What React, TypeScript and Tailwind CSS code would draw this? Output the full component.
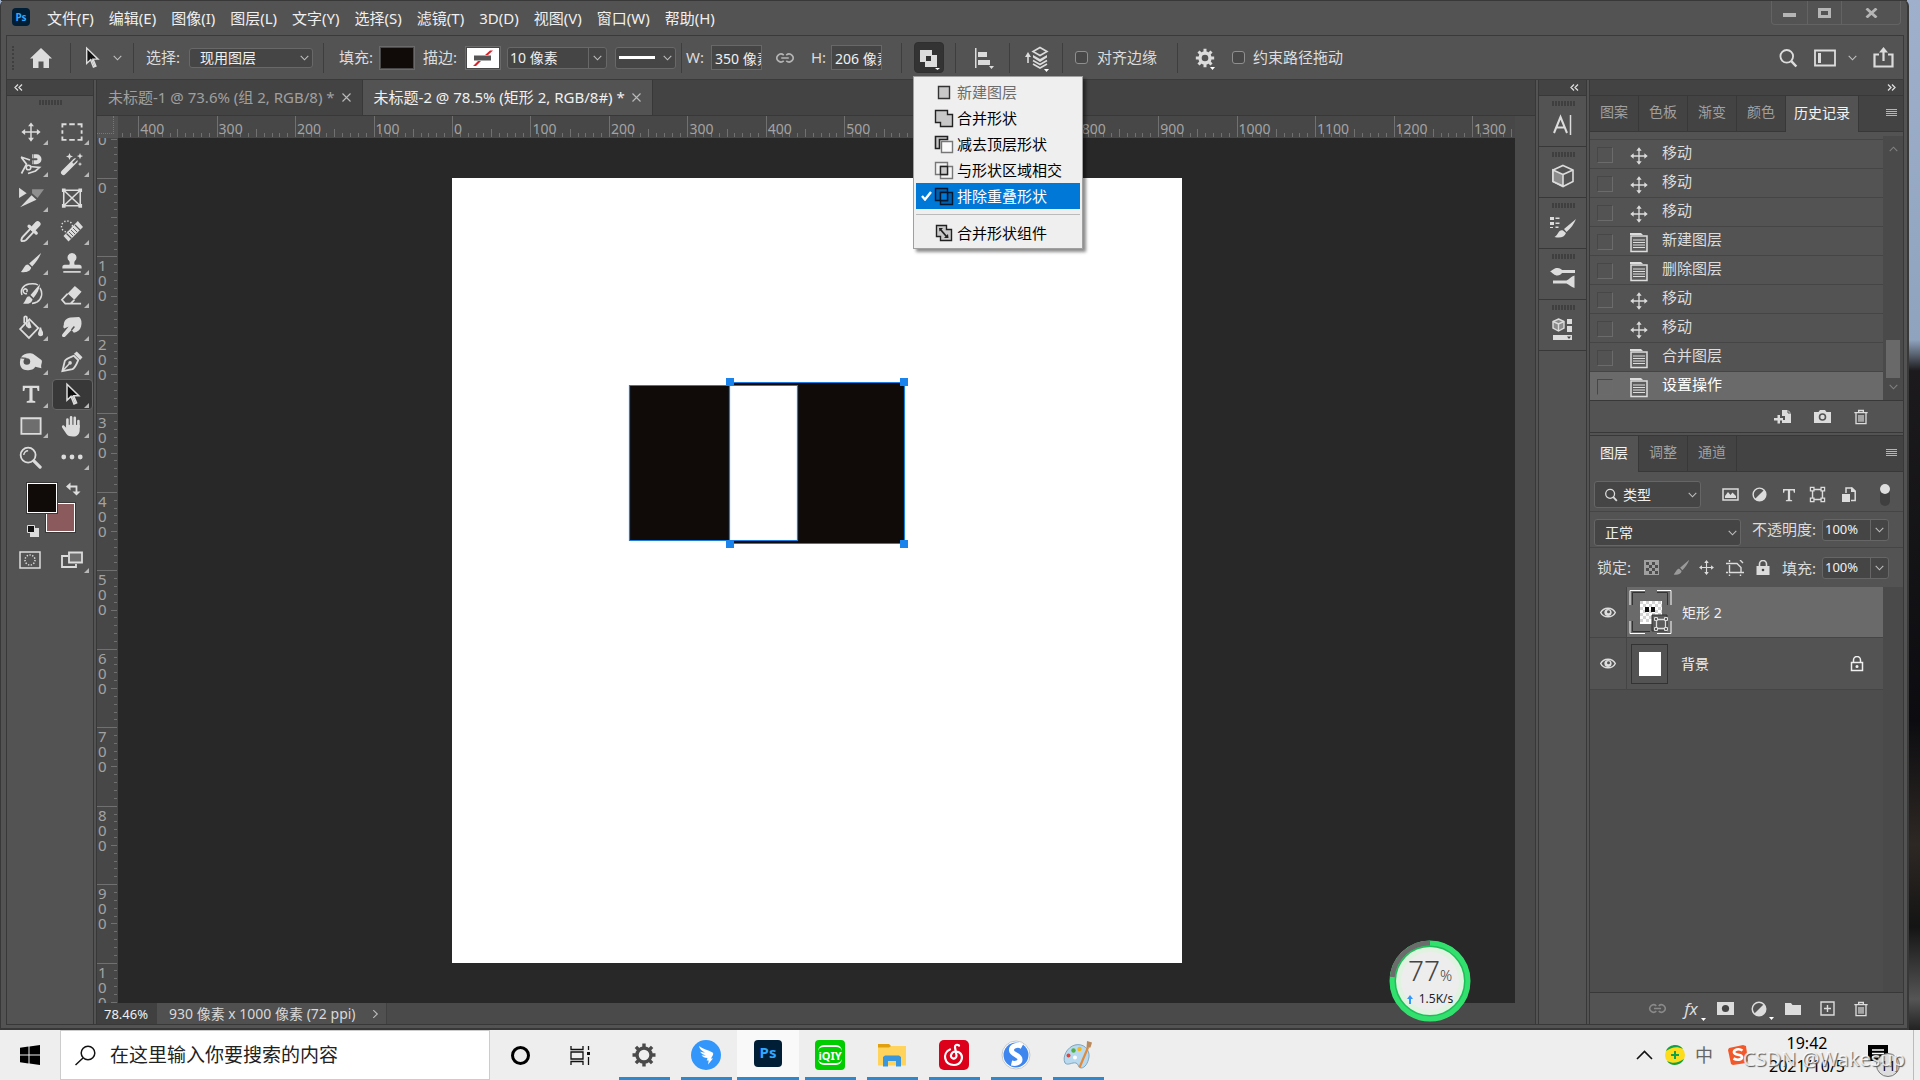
import { ReactNode, useState } from 'react';
import clsx from 'clsx';

// ---------- shared icon helpers ----------

interface IconProps {
  size?: number;
  className?: string;
  children?: ReactNode;
}

function Svg({ size = 24, className, children }: IconProps) {
  return (
    <svg width={size} height={size} viewBox="0 0 24 24" fill="none" stroke="currentColor" strokeWidth={1.6} className={clsx('shrink-0', className)} aria-hidden="true">
      {children}
    </svg>
  );
}

function Chevron({ className }: { className?: string }) {
  return (
    <svg width={9} height={6} viewBox="0 0 9 6" fill="none" stroke="currentColor" strokeWidth={1.1} className={clsx('shrink-0 opacity-80', className)} aria-hidden="true">
      <path d="M.7.8 4.5 4.8 8.3.8" />
    </svg>
  );
}

// Small triangle marking a button that opens a flyout
function Caret() {
  return (
    <svg width={5} height={3} className="absolute right-0.5 -bottom-0.5" aria-hidden="true">
      <path d="M0 0h5L2.500 3z" fill="#fff" />
    </svg>
  );
}

function MoveIcon({ size = 22, className }: IconProps) {
  return (
    <Svg size={size} className={className}>
      <path d="M12 4v16M4 12h16" />
      <path d="M12 1.5 8.8 5.6h6.4zM12 22.5l-3.2-4.1h6.4zM1.5 12l4.1-3.2v6.4zM22.5 12l-4.1-3.2v6.4z" fill="currentColor" stroke="none" />
    </Svg>
  );
}

function ArrowCursor({ size = 24 }: IconProps) {
  return (
    <Svg size={size}>
      <path d="M7 2.2v16l4-3.8 3 7.6 2.6-1.1-3-7.2h5.2z" fill="#111" stroke="#ddd" strokeWidth={1.5} />
      <path d="m11.5 14.2 3 7.3 1.6-.7-3-7z" fill="#ddd" stroke="none" />
    </Svg>
  );
}

function LinkIcon({ size = 20 }: IconProps) {
  return (
    <Svg size={size}>
      <path d="M10.5 8.6A5 4.6 0 1 0 10.5 15.4M13.5 8.6a5 4.6 0 1 1 0 6.8M7.5 12h9" strokeWidth={2} />
    </Svg>
  );
}

function TrashIcon({ size = 18 }: IconProps) {
  return (
    <Svg size={size}>
      <path d="M2 5.5h20M8.5 5V2.2h7V5M4.5 6v16h15V6" strokeWidth={2} />
      <path d="M9 9v10M12 9v10M15 9v10" strokeWidth={1.8} />
    </Svg>
  );
}

function SearchIcon({ size = 20 }: IconProps) {
  return (
    <Svg size={size}>
      <circle cx="10.5" cy="10" r="7.6" strokeWidth={2.2} />
      <path d="m16 15.8 6 6.4" strokeWidth={3} />
    </Svg>
  );
}

function HalfCircle({ size = 18 }: IconProps) {
  return (
    <Svg size={size}>
      <circle cx="12" cy="12" r="9" strokeWidth={2} />
      <path d="M18.4 5.6A9 9 0 0 1 5.6 18.4z" fill="currentColor" stroke="none" />
    </Svg>
  );
}

function ShapeNodes({ size = 18 }: IconProps) {
  return (
    <Svg size={size}>
      <path d="M5 5h14v14H5z" strokeWidth={2} />
      <path d="M2 2h5v5H2zM17 2h5v5h-5zM2 17h5v5H2zM17 17h5v5h-5z" fill="#535353" strokeWidth={1.8} />
    </Svg>
  );
}

function TypeIcon({ size = 22 }: IconProps) {
  return (
    <Svg size={size}>
      <path d="M3 3h18v5.6h-1.7l-.8-3.2h-4.8v13.8l3 .6V21.500H7.300v-1.700l3-.6V5.400H5.500l-.8 3.200H3z" fill="currentColor" stroke="none" />
    </Svg>
  );
}

function GearIcon({ size = 20, className }: IconProps) {
  return (
    <Svg size={size} className={className}>
      <circle cx="12" cy="12" r="6" strokeWidth={4} />
      <path d="M12 1v4M12 19v4M1 12h4M19 12h4M4.200 4.200 7 7M17 17l2.800 2.800M4.200 19.800 7 17M17 7l2.800-2.800" strokeWidth={3.6} />
    </Svg>
  );
}

// ---------- toolbox ----------

interface Tool {
  name: string;
  corner?: boolean;
  active?: boolean;
  icon: ReactNode;
}

const tools: Tool[] = [
  { name: '移动工具', corner: true, icon: <MoveIcon /> },
  { name: '矩形选框工具', corner: true, icon: <Svg size={22}><path d="M1.500 7V3.500H6M9 3.500h6M18 3.500h4.500V7M22.500 10v4M22.500 17v3.500H18M15 20.500H9M6 20.500H1.500V17M1.500 14v-4" strokeWidth={2} /></Svg> },
  { name: '磁性套索工具', corner: true, icon: <Svg size={24}><path d="m2 5 9 3M2.200 5.200l5.300 7-5 9.300M11 14.500l9.500 1-4 3.500-7.500 2.500" strokeWidth={1.700} /><circle cx="9.500" cy="15.500" r="2.300" strokeWidth={1.600} /><path d="M13 4.200h4.500a2.800 2.800 0 0 1 0 6h-4.300" strokeWidth={4} /><path d="M14.200 1.500v5M14.200 8v5" stroke="#535353" strokeWidth={.8} /></Svg> },
  { name: '魔棒工具', corner: true, icon: <Svg size={24}><path d="M3.500 20.500 15 9" strokeWidth={5} strokeLinecap="round" /><path d="m13.500 10.500 3.300-3.300" stroke="#535353" strokeWidth={2} strokeLinecap="round" /><path d="m9.500 1 1 2.500 2.500 1-2.500 1-1 2.500-1-2.500-2.500-1 2.500-1zM20 1l.9 2.200 2.200.9-2.200.9L20 7.200 19.100 5l-2.200-.9 2.200-.9zM20 10l.6 1.500 1.500.6-1.500.6-.6 1.500-.6-1.500-1.500-.6 1.500-.6z" fill="currentColor" stroke="none" /></Svg> },
  { name: '切片选择工具', corner: true, icon: <Svg size={26}><path d="M1 2.500v9.500l7-4.500z" fill="currentColor" stroke="none" /><path d="M2 20.500 12.500 9.500l4.500 4z" fill="currentColor" stroke="none" /><path d="M13 4h11l-6 8-5-4.500z" fill="#8f8f8f" stroke="none" /></Svg> },
  { name: '图框工具', icon: <Svg size={22}><path d="M3 3.500h18v17H3zM3 3.500l18 17M21 3.500l-18 17" strokeWidth={1.700} /><path d="M1 1.500h4v4H1zM19 1.500h4v4h-4zM1 18.500h4v4H1zM19 18.500h4v4h-4z" fill="currentColor" stroke="none" /></Svg> },
  { name: '吸管工具', corner: true, icon: <Svg size={23}><path d="m13 8-9 9.500c-1.500 1.500-2 4.500-1 4.500s3.500-.3 4.500-1.300L16.500 11" strokeWidth={2} /><path d="m10.500 6.500 7.500 7.200M14.500 8.500l4-4.500" strokeWidth={3.400} strokeLinecap="round" /><path d="m15 9 4.500-4.800" strokeWidth={6} strokeLinecap="round" /></Svg> },
  { name: '修复画笔工具', corner: true, icon: <Svg size={24}><circle cx="7" cy="7.500" r="5.500" strokeDasharray="1.300 1.900" strokeWidth={1.400} /><path d="m3.500 17 5 5.500L23 8 17.800 2z" fill="currentColor" stroke="none" /><path d="m6.500 14.500 5 5M15 6l5 5" stroke="#535353" strokeWidth={1.200} /><path d="m9 13 4 4M11 11l4 4M13 9l4 4" stroke="#535353" strokeWidth={.9} /></Svg> },
  { name: '画笔工具', corner: true, icon: <Svg size={22}><path d="M23 1 10 12.500l3.300 3.300C17 12 21 6.500 23 1zM8.800 13.700c-3.800 0-3.800 3.800-7.800 8.100 5 1 10.500-.3 11.200-4.800z" fill="currentColor" stroke="none" /></Svg> },
  { name: '仿制图章工具', corner: true, icon: <Svg size={22}><path d="M12 1a5 5 0 0 1 3.300 8.600c-1 1-1 2.900-.4 4.400H20c1.500 0 2.500 1 2.500 2.500V18h-21v-1.500C1.500 15 2.500 14 4 14h5.100c.6-1.500.6-3.400-.4-4.400A5 5 0 0 1 12 1z" fill="currentColor" stroke="none" /><path d="M2.500 21.700h19" strokeWidth={1.800} /></Svg> },
  { name: '历史记录画笔工具', corner: true, icon: <Svg size={24}><path d="M7.500 10c2-2-1-4-2.500-2.500s-.5 5 3 4M3 13C1 8 4 3 10 2s9 1 9 1M21 6c3 5 2 11-3 14-2 1-5 1.500-5 1.500" strokeWidth={1.500} /><path d="M21 2 11.500 13l3 3C18 12 20.500 7 21 2zM10.300 14.200c-3.500 0-2.500 3.500-6.300 7.300 4.500 1 9 0 9.500-4.300z" fill="currentColor" stroke="none" /></Svg> },
  { name: '橡皮擦工具', corner: true, icon: <Svg size={23}><path d="M8 11 15.500 3l7 6L15 17.500z" fill="currentColor" stroke="none" /><path d="m8 11-6 6.500 3.500 4H11l4-4M5.500 21.500H22" strokeWidth={1.800} /></Svg> },
  { name: '油漆桶工具', corner: true, icon: <Svg size={25}><path d="M2 13.500 11 4l8.500 8.500-9 9.500zM8.500 11V2.500c0-1.500-2.500-1.500-2.500 0V8" strokeWidth={1.700} /><path d="M10.500 4 13 12l-2.500 1-2-1.500z" fill="currentColor" stroke="none" /><path d="M21.500 12c0 3.500-1.500 4-1.500 6s3.500 2 3.500 0-2-3-2-6z" fill="currentColor" /></Svg> },
  { name: '涂抹工具', corner: true, icon: <Svg size={23}><path d="M4 9c0-4 3-7 7-7.500L20 1c2.500 2 3 6 2 10-1 4-4 6-7.500 6.500L12 14.500l-6.500 7c-2 1.500-4.500-.5-3-2.500L9 11l-4.500 2C3 12 3.500 10.500 4 9z" fill="currentColor" stroke="none" /><path d="m12 14.500 3-3.500" stroke="#535353" /></Svg> },
  { name: '海绵工具', corner: true, icon: <Svg size={25}><path d="M3 8c2-4 9-5 12-3l7.500 5.500c1.500 2-1 4 0 8l-6-1.500c-1 3-7 4-10.500 3C1.500 18.500 1 12.500 3 8z" fill="currentColor" stroke="none" /><circle cx="8.500" cy="12" r="3.200" fill="#535353" stroke="none" /><path d="M3 8.500 8 9" stroke="#535353" strokeWidth={1.200} /></Svg> },
  { name: '钢笔工具', corner: true, icon: <Svg size={23}><path d="M2.500 22 5 11.500c2-3 6-4 9.500-5.500l4.500 4.500c-1.500 4-3 7.500-6 9.500z" strokeWidth={1.900} /><path d="m3 21.500 6.500-7" strokeWidth={1.500} /><circle cx="10.500" cy="13.500" r="1.900" fill="currentColor" stroke="none" /><path d="m14.500 4 3-2.500 6 6-2.500 3z" fill="currentColor" stroke="none" /></Svg> },
  { name: '横排文字工具', corner: true, icon: <TypeIcon size={22} /> },
  { name: '路径选择工具', corner: true, active: true, icon: <ArrowCursor /> },
  { name: '矩形工具', corner: true, icon: <Svg size={22}><path d="M1.500 3.500h21v17h-21z" fill="#6e6e6e" strokeWidth={2} /></Svg> },
  { name: '抓手工具', corner: true, icon: <Svg size={22}><path d="M7 12.500V5M11 12V2.500M15 12V3M19 13V6.500" strokeWidth={2.800} strokeLinecap="round" /><path d="M5.600 10.500V14L3.500 11.800c-1.500-1.300-3.200.2-2.300 1.700L6 20.800c1.500 2 3.500 2.700 7 2.700 5 0 7.400-3 7.400-7.500v-5z" fill="currentColor" stroke="none" /></Svg> },
  { name: '缩放工具', icon: <Svg size={23}><circle cx="9.500" cy="9.500" r="7.800" strokeWidth={1.900} /><path d="M5 9.500A4.500 4.500 0 0 1 9.500 5" strokeWidth={1.500} /><path d="m15.500 15.500 6.500 6.500" strokeWidth={3.400} strokeLinecap="round" /></Svg> },
  { name: '编辑工具栏', corner: true, icon: <Svg size={22}><circle cx="3" cy="12" r="2.600" fill="currentColor" stroke="none" /><circle cx="12" cy="12" r="2.600" fill="currentColor" stroke="none" /><circle cx="21" cy="12" r="2.600" fill="currentColor" stroke="none" /></Svg> },
];

function Corner() {
  return (
    <svg width={5} height={5} viewBox="0 0 5 5" className="absolute right-[4px] bottom-[3px]" aria-hidden="true">
      <path d="M5 0v5H0z" fill="#b8b8b8" />
    </svg>
  );
}

function Grip() {
  return (
    <svg width={24} height={5} className="mx-auto mt-1 block text-[#3f3f3f]" aria-hidden="true">
      <path d="M1 2.500h24" stroke="currentColor" strokeWidth={5} strokeDasharray="2 1" />
    </svg>
  );
}

function Toolbox() {
  return (
    <aside className="flex w-[88px] shrink-0 flex-col border-x border-[#383838] bg-[#535353] text-[#dcdcdc]">
      <div className="flex h-4 items-center border-b border-[#383838] bg-[#434343] pl-[7px]">
        <DoubleArrow />
      </div>
      <Grip />
      <div className="mt-3 ml-1 grid h-[356px] grid-cols-2">
        {tools.map((tool) => (
          <button key={tool.name} type="button" aria-label={tool.name} aria-pressed={tool.active} className="relative flex items-center justify-center pr-0.5">
            {tool.active && <span className="absolute inset-x-0 inset-y-px rounded-sm border border-[#666] bg-[#383838]" />}
            <span className="relative">{tool.icon}</span>
            {tool.corner && <Corner />}
          </button>
        ))}
      </div>
      <svg width={60} height={56} viewBox="0 0 60 56" className="mt-2 ml-[18px]" aria-label="前景色和背景色">
        <rect x="20.500" y="21.500" width="30" height="30" fill="#8a5a5c" stroke="#383838" />
        <rect x="21.500" y="22.500" width="28" height="28" fill="#8a5a5c" stroke="#fff" />
        <rect x="1.500" y="1.500" width="31" height="31" stroke="#383838" />
        <rect x="2.500" y="2.500" width="29" height="29" fill="#100a08" stroke="#fff" />
        <path d="M43 5.500h8.500V12" stroke="#ddd" strokeWidth={1.800} fill="none" />
        <path d="m41 5.500 4.500-4v8zM51.500 14.500l-4-4h8z" fill="#ddd" />
        <path d="M5 47h9v9H5z" fill="#ddd" />
        <path d="M2.500 44.500h7v7h-7z" fill="#111" stroke="#ddd" />
      </svg>
      <div className="mt-[7px] ml-0.5 grid h-8 grid-cols-2">
        <button type="button" aria-label="快速蒙版" className="flex items-center justify-center">
          <svg width={22} height={18} viewBox="0 0 22 18" fill="none" stroke="currentColor" strokeWidth={1.500}>
            <path d="M1 1h20v16H1z" />
            <circle cx="11" cy="9" r="5" strokeDasharray="1.300 1.500" />
          </svg>
        </button>
        <button type="button" aria-label="屏幕模式" className="relative flex items-center justify-center">
          <svg width={24} height={18} viewBox="0 0 24 18" fill="none" stroke="currentColor" strokeWidth={1.800}>
            <path d="M8 5H2v11h14v-3" />
            <path d="M9 1.500h13v10H9z" fill="#6e6e6e" />
          </svg>
          <Corner />
        </button>
      </div>
    </aside>
  );
}

function DoubleArrow({ right }: { right?: boolean }) {
  return (
    <svg width={9} height={7} viewBox="0 0 9 7" fill="none" stroke="#ddd" strokeWidth={1.300} className={clsx(right && 'rotate-180')} aria-hidden="true">
      <path d="M4 .5 1 3.500l3 3M8 .5 5 3.500l3 3" />
    </svg>
  );
}

// ---------- menu bar ----------

const menus = ['文件(F)', '编辑(E)', '图像(I)', '图层(L)', '文字(Y)', '选择(S)', '滤镜(T)', '3D(D)', '视图(V)', '窗口(W)', '帮助(H)'];

function MenuBar() {
  return (
    <header className="flex h-[35px] shrink-0 items-start border-t border-[#383838] pl-[11px]">
      <span className="mt-[7px] flex size-[18px] items-center justify-center rounded bg-[#001e36] text-[10px] font-bold text-[#31a8ff]">Ps</span>
      <nav className="mt-[5px] ml-[17px] flex gap-[15px] text-[15px] leading-6 text-[#f0f0f0]">
        {menus.map((menu) => (
          <button key={menu} type="button" className="whitespace-nowrap">{menu}</button>
        ))}
      </nav>
      <div className="mr-1.5 ml-auto flex h-6 rounded-b border border-t-0 border-[#636363] text-[#b5b5b5]">
        <button type="button" aria-label="最小化" className="flex w-9 items-center justify-center border-r border-[#636363]">
          <span className="mt-1 h-1 w-[13px] bg-[#b5b5b5]" />
        </button>
        <button type="button" aria-label="还原" className="flex w-[34px] items-center justify-center border-r border-[#636363]">
          <span className="h-[10px] w-[13px] border-[3px] border-[#b5b5b5]" />
        </button>
        <button type="button" aria-label="关闭" className="flex w-[58px] items-center justify-center">
          <svg width={13} height={10} viewBox="0 0 13 10" stroke="currentColor" strokeWidth={2.800}><path d="m1.500.5 10 9M11.500.5l-10 9" /></svg>
        </button>
      </div>
    </header>
  );
}

// ---------- path operations popup ----------

const operations = [
  { label: '新建图层', disabled: true, icon: <path d="M4.500 3.500h11v12h-11z" fill="#c8c8c8" stroke="#333" /> },
  { label: '合并形状', icon: <path d="M1.500 1.500h12v4h5v12h-12v-4h-5z" fill="#c8c8c8" stroke="#222" /> },
  { label: '减去顶层形状', icon: <><path d="M1.500 1.500h12v3h-8v9h-4z" fill="#c8c8c8" stroke="#222" strokeWidth={1.600} /><path d="M7.500 6.500h11v11h-11z" fill="#fafafa" stroke="#777" /></> },
  { label: '与形状区域相交', icon: <><path d="M1.500 1.500h12v12h-12zM6.500 5.500h12v12h-12z" fill="#f4f4f4" stroke="#777" /><path d="M6.500 5.500h7v8h-7z" fill="#c8c8c8" stroke="#222" /></> },
  { label: '排除重叠形状', icon: <><path d="M1.500 1.500h12v12h-12zM6.500 5.500h12v12h-12z" fill="#0060ae" stroke="#04162b" /><path d="M6.500 5.500h7v8h-7z" fill="#0078d7" stroke="#04162b" /></> },
];

function OperationsMenu({ value, onPick }: { value: string; onPick: (label: string) => void }) {
  return (
    <div role="menu" className="absolute top-[34px] -left-px z-20 w-[170px] border border-[#a0a0a0] bg-[#efefef] p-0.5 text-[15px] text-black shadow-[3px_3px_3px_rgba(0,0,0,0.45)]">
      {operations.map((op) => (
        <button
          key={op.label}
          type="button"
          role="menuitemradio"
          aria-checked={op.label === value}
          disabled={op.disabled}
          onClick={() => onPick(op.label)}
          className={clsx('flex h-[26px] w-full items-center pl-0.5 whitespace-nowrap', op.label === value && 'bg-[#0078d7] text-white', op.disabled && 'text-[#6d6d6d]')}
        >
          <span className="flex w-4 justify-center">
            {op.label === value && (
              <svg width={11} height={10} viewBox="0 0 11 10" fill="none" stroke="currentColor" strokeWidth={2.400}><path d="m1 5 3 3.500L10 1" /></svg>
            )}
          </span>
          <svg width={20} height={19} viewBox="0 0 20 19" strokeWidth={1.400} className="mr-[3px] shrink-0">{op.icon}</svg>
          {op.label}
        </button>
      ))}
      <hr className="my-[5px] border-[#bbb]" />
      <button type="button" role="menuitem" className="flex h-[26px] w-full items-center pl-[18px] whitespace-nowrap">
        <svg width={20} height={19} viewBox="0 0 20 19" fill="none" stroke="#222" strokeWidth={1.400} className="mr-[3px] shrink-0">
          <path d="M2.500 1.500h10v4h5v11h-11v-4h-4z" fill="#c8c8c8" />
          <path d="m6.500 5.500 6 7" strokeWidth={1.800} />
          <path d="M5 4h4L5.500 7.500zM14.500 14h-4.500l4-4z" fill="#222" stroke="none" />
        </svg>
        合并形状组件
      </button>
    </div>
  );
}

// ---------- options bar ----------

function Divider({ className }: { className: string }) {
  return <span className={clsx('h-[30px] w-0.5 shrink-0 border-l border-[#3e3e3e]', className)} />;
}

function OptionsBar() {
  const [operation, setOperation] = useState('排除重叠形状');
  const field = 'rounded-[3px] border border-[#686868] bg-[#454545] text-[14px] text-[#f0f0f0]';

  return (
    <div className="mr-[3px] ml-[5px] flex h-[45px] shrink-0 items-center border border-[#3a3a3a] text-[15px] whitespace-nowrap text-[#dcdcdc]">
      <span className="ml-[5px] h-6 w-[3px] shrink-0 border-l-2 border-dotted border-[#3f3f3f]" />
      <button type="button" aria-label="主页" className="ml-[15px] shrink-0">
        <svg width={22} height={20} viewBox="0 0 22 20" fill="currentColor"><path d="M11 0 0 10.500h3V20h5.500v-6.500h5V20H19v-9.500h3z" /></svg>
      </button>
      <Divider className="ml-[18px]" />
      <button type="button" aria-label="路径选择工具" className="ml-2 flex w-6 shrink-0"><ArrowCursor size={23} /></button>
      <Chevron className="ml-[9px]" />
      <Divider className="ml-[11px]" />
      <label htmlFor="select-layer" className="ml-[11px] w-[43px]">选择:</label>
      <div className="relative flex w-[124px] shrink-0 items-center">
        <select id="select-layer" className={clsx(field, 'h-5 w-full appearance-none pl-[10px] leading-4')}>
          <option>现用图层</option>
        </select>
        <Chevron className="pointer-events-none absolute right-1" />
      </div>
      <Divider className="ml-[10px]" />
      <span className="ml-[14px] w-10">填充:</span>
      <button type="button" aria-label="填充颜色" className="h-6 w-9 shrink-0 border border-[#6a6a6a] bg-[#100a08] ring-1 ring-[#484848] ring-inset" />
      <span className="ml-2 w-[42px]">描边:</span>
      <button type="button" aria-label="描边颜色" className="flex h-6 w-9 shrink-0 items-center justify-center border border-[#6a6a6a] bg-white ring-1 ring-[#484848] ring-inset">
        <svg width={32} height={18} viewBox="0 0 32 18"><path d="m6 17 5-5h3l-5 5zM18 6l5-4.500h3L21 6z" fill="#d8232a" /><path d="M7 6.500h17v5H7z" fill="#555" /></svg>
      </button>
      <div className="ml-[6px] flex w-[100px] shrink-0 items-center rounded-[3px] border border-[#686868] bg-[#454545]">
        <input aria-label="描边宽度" defaultValue="10 像素" className="h-5 w-[80px] bg-transparent pl-0.5 text-[14px] text-[#f0f0f0]" />
        <button type="button" aria-label="描边宽度选项" className="flex h-5 w-[18px] items-center justify-center border-l border-[#686868]"><Chevron /></button>
      </div>
      <button type="button" aria-label="描边类型" className="ml-2 flex h-[22px] w-[61px] shrink-0 items-center justify-between rounded-[3px] border border-[#686868] bg-[#454545] px-[3px]">
        <span className="h-[3px] w-9 bg-white" />
        <Chevron />
      </button>
      <Divider className="ml-[5px]" />
      <label htmlFor="shape-w" className="ml-[3px] w-[25px]">W:</label>
      <input id="shape-w" defaultValue="350 像素" className="h-[25px] w-[51px] shrink-0 border border-[#686868] bg-[#454545] pl-[3px] text-[14px] text-[#f0f0f0]" />
      <button type="button" aria-label="链接宽高" className="ml-[13px] w-5 shrink-0 text-[#b5b5b5]"><LinkIcon /></button>
      <label htmlFor="shape-h" className="ml-4 w-5">H:</label>
      <input id="shape-h" defaultValue="206 像素" className="h-[25px] w-[51px] shrink-0 border border-[#686868] bg-[#454545] pl-[3px] text-[14px] text-[#f0f0f0]" />
      <Divider className="ml-[19px]" />
      <div className="relative ml-[11px] shrink-0">
        <button type="button" aria-label="路径操作" aria-haspopup="menu" aria-expanded="true" className="flex h-[31px] w-[30px] items-center justify-center rounded-sm border border-[#2f2f2f] bg-[#333]">
          <svg width={22} height={24} viewBox="0 0 22 24">
            <path fillRule="evenodd" d="M2 4h12v5h5v12H7v-5H2zM8 10v5h5v-5z" fill="#ddd" />
            <path d="M17 22h5l-2.500 2z" fill="#fff" />
          </svg>
        </button>
        <OperationsMenu value={operation} onPick={setOperation} />
      </div>
      <Divider className="ml-[11px]" />
      <button type="button" aria-label="路径对齐方式" className="ml-4 shrink-0">
        <svg width={22} height={22} viewBox="0 0 22 22" fill="currentColor"><path d="M2 1h1.500v20H2zM5 5h9v5H5zM5 13h12v5H5zM16 19h5l-2.500 3z" /></svg>
      </button>
      <Divider className="ml-[14px]" />
      <button type="button" aria-label="路径排列方式" className="relative ml-3 shrink-0">
        <svg width={28} height={24} viewBox="0 0 28 24" fill="none" stroke="currentColor" strokeWidth={1.600}>
          <path d="M5 17V8" /><path d="M5 6 2 11h6z" fill="currentColor" stroke="none" />
          <path d="m17 1.500 7 4-7 4-7-4z" /><path d="m10 9 7 4 7-4v2.500l-7 4.500-7-4.500z" fill="currentColor" stroke="none" /><path d="m10 14.500 7 4 7-4M10 18l7 4 7-4" />
        </svg>
        <Caret />
      </button>
      <Divider className="ml-[11px]" />
      <label className="ml-[11px] flex shrink-0 items-center gap-[9px]">
        <input type="checkbox" className="size-[13px] appearance-none rounded-[3px] border border-[#8f8f8f] bg-[#484848]" />
        对齐边缘
      </label>
      <Divider className="ml-5" />
      <button type="button" aria-label="其他选项" className="relative ml-4 shrink-0 pr-0.5">
        <GearIcon />
        <Caret />
      </button>
      <label className="ml-[15px] flex shrink-0 items-center gap-2">
        <input type="checkbox" className="size-[13px] appearance-none rounded-[3px] border border-[#8f8f8f] bg-[#484848]" />
        约束路径拖动
      </label>
      <div className="mr-[9px] ml-auto flex shrink-0 items-center gap-4">
        <button type="button" aria-label="搜索"><SearchIcon size={20} /></button>
        <button type="button" aria-label="工作区" className="flex items-center gap-3">
          <svg width={22} height={18} viewBox="0 0 22 18" fill="none" stroke="currentColor" strokeWidth={1.800}><path d="M1 1.500h20v15H1z" /><path d="M4 4h3v10H4z" fill="currentColor" stroke="none" /></svg>
          <Chevron />
        </button>
        <button type="button" aria-label="共享">
          <svg width={21} height={21} viewBox="0 0 21 21" fill="none" stroke="currentColor" strokeWidth={2.200}><path d="M6 7.500H1.500v12h18v-12H15M10.500 14V4" /><path d="M10.500 0 6 5.500h9z" fill="currentColor" stroke="none" /></svg>
        </button>
      </div>
    </div>
  );
}

// ---------- rulers ----------

// 100 document pixels at 78.46% zoom
const STEP = 78.46;

function HorizontalRuler() {
  const origin = 334;
  const ticks = Array.from({ length: 180 }, (_, i) => i - 42).filter((i) => i * STEP / 10 + origin > 0);
  return (
    <svg height={22} className="block w-full bg-[#474747]" aria-hidden="true">
      {ticks.map((i) => {
        const x = Math.round(origin + (i * STEP) / 10) + 0.5;
        const top = i % 10 === 0 ? 0 : i % 5 === 0 ? 13 : 17;
        return <path key={i} d={`M${x} ${top}V21`} stroke="#707070" />;
      })}
      {Array.from({ length: 18 }, (_, i) => i - 4).map((i) => (
        <text key={i} x={origin + i * STEP + 2} y={18} fontSize={14} fill="#a3a3a3">{Math.abs(i * 100)}</text>
      ))}
    </svg>
  );
}

function VerticalRuler() {
  const origin = 40;
  const ticks = Array.from({ length: 112 }, (_, i) => i - 5);
  return (
    <svg width={21} className="block h-full shrink-0 bg-[#474747]" aria-hidden="true">
      {ticks.map((i) => {
        const y = Math.round(origin + (i * STEP) / 10) + 0.5;
        const left = i % 10 === 0 ? 0 : i % 5 === 0 ? 14 : 17;
        return <path key={i} d={`M${left} ${y}H20`} stroke="#707070" />;
      })}
      {Array.from({ length: 12 }, (_, i) => i - 1).map((i) =>
        (i < 0 ? '100' : String(i * 100)).split('').map((digit, n) => (
          <text key={`${i}-${n}`} x={1} y={origin + i * STEP + 15 + n * 15} fontSize={15} fill="#a3a3a3">{digit}</text>
        )),
      )}
    </svg>
  );
}

// ---------- document ----------

function Artboard() {
  return (
    <svg width={730} height={785} viewBox="0 0 730 785" className="block shrink-0 bg-white" aria-label="画布">
      <path fillRule="evenodd" d="M177 207h168v156H177zM277 204h175v162H277z" fill="#100b08" />
      <g fill="none" stroke="#1c7fe0" strokeWidth={1.200}>
        <path d="M177.500 207.500h168v155h-168z" />
        <path d="M277.500 204.500h175v161h-175z" />
      </g>
      <path d="M274 200h8v8h-8zM448 200h8v8h-8zM274 362h8v8h-8zM448 362h8v8h-8z" fill="#1a84ec" />
    </svg>
  );
}

function DocumentTab({ title, active }: { title: string; active?: boolean }) {
  return (
    <div className={clsx('flex h-full items-center gap-[7px] border-r border-[#383838] px-[11px] whitespace-nowrap', active ? 'bg-[#535353] text-[#f0f0f0]' : 'text-[#a0a0a0]')}>
      <button type="button" role="tab" aria-selected={!!active}>{title}</button>
      <button type="button" aria-label="关闭文档">
        <svg width={9} height={9} viewBox="0 0 9 9" stroke="#bbb" strokeWidth={1.100}><path d="m.5.5 8 8M8.500.5l-8 8" /></svg>
      </button>
    </div>
  );
}

function DocumentArea() {
  return (
    <main className="ml-0.5 flex min-w-0 flex-1 flex-col border-x border-[#383838] bg-[#4a4a4a]">
      <div role="tablist" className="flex h-[35px] shrink-0 bg-[#434343] text-[15px]">
        <DocumentTab title="未标题-1 @ 73.6% (组 2, RGB/8) *" />
        <DocumentTab title="未标题-2 @ 78.5% (矩形 2, RGB/8#) *" active />
      </div>
      <div className="flex min-h-0 flex-1 border-t border-[#383838]">
        <div className="flex w-[21px] shrink-0 flex-col">
          <div className="flex h-[22px] shrink-0 bg-[#535353] pr-1 pb-1">
            <span className="flex-1 border-r border-b border-dotted border-[#777]" />
          </div>
          <div className="min-h-0 flex-1"><VerticalRuler /></div>
        </div>
        <div className="flex min-w-0 flex-1 flex-col">
          <HorizontalRuler />
          <div className="min-h-0 flex-1 overflow-hidden bg-[#282828] pt-10 pl-[334px]">
            <Artboard />
          </div>
        </div>
        <div className="w-5 shrink-0" />
      </div>
      <footer className="flex h-[21px] shrink-0 items-center text-[14px] leading-5 text-[#d8d8d8]">
        <input aria-label="缩放比例" defaultValue="78.46%" className="h-full w-[60px] bg-[#404040] pl-[7px] text-[13px] text-[#f0f0f0]" />
        <button type="button" className="flex h-full w-[230px] items-center justify-between border-r border-[#404040] bg-[#505050] pr-[6px] pl-3 whitespace-nowrap">
          930 像素 x 1000 像素 (72 ppi)
          <Chevron className="-rotate-90" />
        </button>
      </footer>
    </main>
  );
}

// ---------- collapsed dock ----------

const dockIcons = [
  <svg key="char" width={22} height={24} viewBox="0 0 22 24" fill="none" stroke="currentColor" strokeWidth={2}><path d="M2 20 8.500 4 15 20M4.500 14.500h8" /><path d="M18.500 2v20" strokeWidth={1.500} /></svg>,
  <Svg key="3d" size={24}><path d="M12 1.500 22 6v11.500l-10 5-10-5V6z" /><path d="M2 6l10 4.500V22L2 17.500z" fill="#8b8b8b" /><path d="m22 6-10 4.500" /></Svg>,
  <svg key="brushset" width={26} height={24} viewBox="0 0 26 24" fill="currentColor"><path d="M0 2h4v3H0zM0 7h4v3H0zM0 12h3v1H0zM5.500 2.500h4V4h-4zM5.500 7.500h4V9h-4zM5.500 11.500h3V13h-3zM26 4 14 14l2.500 3C21 13 24 9 26 4zM13 15.500c-5-1-4 4-8.500 6.500 6 1.500 10 0 11.500-4z" /></svg>,
  <svg key="brush" width={26} height={22} viewBox="0 0 26 22" fill="currentColor"><path d="M0 4.500C3 3 4 1 7.500 1c2.500 0 3.500 1 4.500 2h13v3H12c-1 1.500-2.500 2.500-4.500 2.500C4 8.500 3 6 0 4.500zM3 13.500h13.500C19 12.500 21 9.500 24.500 8.500v12.500c-3.500-1-5.500-3.500-8-4.500H3z" /></svg>,
  <svg key="source" width={22} height={24} viewBox="0 0 22 24" fill="currentColor"><path d="M6.500 2 12 4.500v6.500l-5.500 3L1 11V4.500z" fill="#8b8b8b" stroke="currentColor" strokeWidth={1.400} /><path d="m1 4.500 5.500 2.500L12 4.500M6.500 7v7" fill="none" stroke="currentColor" strokeWidth={1.400} /><path d="M15 2h5v5h-5zM15 9h5v6h-5zM1 18h19v5H1z" /><path d="M15 19.500h4L17 22z" fill="#444" /></svg>,
];
const dockNames = ['字符', '3D', '画笔设置', '画笔', '仿制源'];

function Dock() {
  return (
    <aside className="ml-0.5 w-[49px] shrink-0 border-x border-[#383838] bg-[#535353] text-[#dcdcdc]">
      <div className="flex h-4 items-center justify-end border-b border-[#383838] bg-[#434343] pr-[7px]"><DoubleArrow /></div>
      {dockIcons.map((icon, i) => (
        <div key={dockNames[i]} className="h-[51px] border-b border-[#383838] pt-px">
          <Grip />
          <button type="button" aria-label={dockNames[i]} className="mx-auto flex h-[38px] items-center justify-center">{icon}</button>
        </div>
      ))}
    </aside>
  );
}

// ---------- panels ----------

function PanelTabs({ tabs, active }: { tabs: string[]; active: string }) {
  return (
    <div role="tablist" className="flex h-9 shrink-0 bg-[#434343] text-[14px]">
      {tabs.map((tab) => (
        <button
          key={tab}
          type="button"
          role="tab"
          aria-selected={tab === active}
          className={clsx('border-r border-[#383838] pb-1', tab.length > 2 ? 'w-[73px]' : 'w-[49px]', tab === active ? 'bg-[#535353] text-[#f4f4f4]' : 'border-b text-[#a0a0a0]')}
        >
          {tab}
        </button>
      ))}
      <span className="flex flex-1 items-center justify-end border-b border-[#383838] pr-[6px] pb-0.5">
        <svg width={11} height={9} viewBox="0 0 11 9" stroke="#b5b5b5"><path d="M0 1.500h11M0 3.500h11M0 5.500h11M0 7.500h11" /></svg>
      </span>
    </div>
  );
}

const history = ['移动', '移动', '移动', '新建图层', '删除图层', '移动', '移动', '合并图层', '设置操作'];

function HistoryIcon() {
  return (
    <svg width={20} height={20} viewBox="0 0 20 20" aria-hidden="true">
      <path d="M1 0h11l2 2H1z" fill="#ddd" />
      <path d="M2 3h16v15.500H2z" fill="#5c5c5c" stroke="#ddd" strokeWidth={1.500} />
      <path d="M4 7h12M4 9.500h12M4 12h12M4 14.500h12" stroke="#ddd" />
    </svg>
  );
}

function HistoryPanel() {
  return (
    <section className="flex h-[337px] shrink-0 flex-col border-b border-[#383838]">
      <PanelTabs tabs={['图案', '色板', '渐变', '颜色', '历史记录']} active="历史记录" />
      <div className="mt-1 flex min-h-0 flex-1">
        <ul className="flex min-w-0 flex-1 flex-col justify-end text-[15px] text-[#dcdcdc]">
          {history.map((entry, i) => (
            <li key={i} className={clsx('flex h-[29px] items-center border-t border-[#454545] pl-[7px]', i === history.length - 1 && 'bg-[#6a6a6a] text-white')}>
              <input type="checkbox" aria-label={`设置源 ${entry}`} className="mt-0.5 size-4 appearance-none border border-[#474747] border-r-[#6b6b6b] border-b-[#6b6b6b]" />
              <span className="mt-1 ml-4 flex w-5 justify-center">{entry === '移动' ? <MoveIcon size={20} /> : <HistoryIcon />}</span>
              <span className="mb-[3px] ml-[13px]">{entry}</span>
            </li>
          ))}
        </ul>
        <div className="flex w-5 shrink-0 flex-col items-center bg-[#4a4a4a] py-[10px] text-[#8f8f8f]">
          <Chevron className="rotate-180" />
          <span className="mt-auto mb-[6px] h-[38px] w-[14px] bg-[#696969]" />
          <Chevron />
        </div>
      </div>
      <div className="flex h-8 shrink-0 items-center justify-end gap-[22px] border-t border-[#383838] pr-[34px] text-[#dcdcdc]">
        <button type="button" aria-label="从当前状态创建新文档">
          <svg width={18} height={15} viewBox="0 0 18 15" fill="currentColor"><path d="M8 1h6l3 3v10H8v-3h3V7H8zM3.500 6H6v3h3v2.500H6v3H3.500v-3H0V9h3.500z" /><path d="M14 0v4h4" fill="none" stroke="#535353" /></svg>
        </button>
        <button type="button" aria-label="创建新快照">
          <svg width={17} height={13} viewBox="0 0 17 13"><path d="M0 2h4.500L6 0h5l1.500 2H17v11H0z" fill="currentColor" /><circle cx="8.500" cy="7" r="3" fill="none" stroke="#535353" strokeWidth={1.600} /></svg>
        </button>
        <button type="button" aria-label="删除当前状态"><TrashIcon size={16} /></button>
      </div>
    </section>
  );
}

function PercentField({ label, id }: { label: string; id: string }) {
  return (
    <>
      <label htmlFor={id} className="ml-auto leading-5">{label}</label>
      <div className="ml-1.5 flex h-[22px] w-[67px] shrink-0 items-center rounded-[3px] border border-[#666] bg-[#454545]">
        <input id={id} defaultValue="100%" className="w-[47px] bg-transparent pl-0.5 text-[13px] text-[#f0f0f0]" />
        <button type="button" aria-label={`${label}选项`} className="flex h-full w-[18px] items-center justify-center border-l border-[#666]"><Chevron /></button>
      </div>
    </>
  );
}

function EyeIcon() {
  return (
    <svg width={16} height={11} viewBox="0 0 16 11" aria-hidden="true">
      <path d="M.7 5.500C3.500-.3 12.500-.3 15.300 5.500 12.500 11.300 3.500 11.300.7 5.500z" fill="#535353" stroke="#ddd" strokeWidth={1.500} />
      <circle cx="8" cy="5.500" r="3.600" fill="#ddd" /><circle cx="8.500" cy="4.800" r="1.500" fill="#535353" />
    </svg>
  );
}

function LayersPanel() {
  return (
    <section className="mt-0.5 flex min-h-0 flex-1 flex-col border-t border-[#383838] text-[15px] text-[#dcdcdc]">
      <PanelTabs tabs={['图层', '调整', '通道']} active="图层" />
      <div className="flex h-10 shrink-0 items-center border-b border-[#454545] pt-1.5 pl-1">
        <div className="relative flex w-[107px] items-center">
          <span className="pointer-events-none absolute left-[10px]"><SearchIcon size={14} /></span>
          <select aria-label="滤镜类型" className="h-[27px] w-full appearance-none rounded-[3px] border border-[#666] bg-[#454545] pl-7 text-[14px] text-[#f0f0f0]">
            <option>类型</option>
          </select>
          <Chevron className="pointer-events-none absolute right-1" />
        </div>
        <div className="ml-[21px] flex items-center gap-3">
          <button type="button" aria-label="像素图层滤镜"><svg width={17} height={13} viewBox="0 0 17 13"><path d="M1 1h15v11H1z" fill="none" stroke="currentColor" strokeWidth={1.500} /><path d="M3 10V8l3-4 2.500 3 2-2.500L14 8v2z" fill="currentColor" /></svg></button>
          <button type="button" aria-label="调整图层滤镜"><HalfCircle size={17} /></button>
          <button type="button" aria-label="文字图层滤镜" className="ml-px"><TypeIcon size={16} /></button>
          <button type="button" aria-label="形状图层滤镜"><ShapeNodes size={17} /></button>
          <button type="button" aria-label="智能对象滤镜" className="ml-1"><svg width={14} height={15} viewBox="0 0 14 15"><path d="M4 6V1h6l3.200 3v9.500H9" fill="none" stroke="currentColor" strokeWidth={1.500} /><path d="M9 0v5h5M0 7h8v8H0z" fill="currentColor" /></svg></button>
        </div>
        <button type="button" role="switch" aria-checked="true" aria-label="打开图层过滤" className="mr-[13px] ml-auto flex h-[22px] w-[10px] items-start rounded-full bg-[#3f3f3f]">
          <span className="size-[10px] rounded-full bg-[#ddd]" />
        </button>
      </div>
      <div className="flex h-9 shrink-0 items-start border-b border-[#454545] pt-[7px] pr-[14px] pl-1">
        <div className="relative flex w-[147px] items-center">
          <select aria-label="混合模式" className="h-[27px] w-full appearance-none rounded-[3px] border border-[#666] bg-[#454545] pl-[10px] text-[14px] text-[#f0f0f0]">
            <option>正常</option>
          </select>
          <Chevron className="pointer-events-none absolute right-1" />
        </div>
        <PercentField label="不透明度:" id="opacity" />
      </div>
      <div className="flex h-[39px] shrink-0 items-center pr-[14px] pl-[7px]">
        <span>锁定:</span>
        <div className="ml-[13px] flex items-center gap-3">
          <button type="button" aria-label="锁定透明像素"><svg width={15} height={15} viewBox="0 0 15 15"><path d="M0 0h15v15H0z" fill="#a0a0a0" /><path d="M2 2h3v3H2zM8 2h3v3H8zM5 5h3v3H5zM11 5h3v3h-3zM2 8h3v3H2zM8 8h3v3H8zM5 11h3v3H5zM11 11h3v3h-3z" fill="#4c4c4c" /></svg></button>
          <button type="button" aria-label="锁定图像像素" className="ml-0.5 text-[#9a9a9a]"><Svg size={17}><path d="M23 1 10 12.500l3.300 3.300C17 12 21 6.500 23 1zM8.800 13.700c-3.800 0-3.800 3.800-7.800 8.100 5 1 10.500-.3 11.200-4.800z" fill="currentColor" stroke="none" /></Svg></button>
          <button type="button" aria-label="锁定位置" className="-ml-1"><MoveIcon size={17} /></button>
          <button type="button" aria-label="防止自动嵌套" className="-ml-px"><svg width={18} height={16} viewBox="0 0 18 16" fill="none" stroke="currentColor" strokeWidth={1.400}><path d="M0 3.500h11l4 4V12M3.500 5v7.500H18M3.500 0v2M3.500 14.500V16M14.500 14.500V16M0 12.500h2M14 0l3 3" /></svg></button>
          <button type="button" aria-label="锁定全部"><svg width={14} height={15} viewBox="0 0 14 15"><path d="M3.500 7V4a3.500 3.500 0 0 1 7 0v3" fill="none" stroke="currentColor" strokeWidth={1.600} /><path d="M.5 6h13v9H.5z" fill="currentColor" /><circle cx="7" cy="10" r="1.300" fill="#444" /></svg></button>
        </div>
        <PercentField label="填充:" id="fill" />
      </div>
      <div className="flex min-h-0 flex-1 bg-[#4d4d4d]">
        <ul className="min-w-0 flex-1 text-[14px] text-[#f0f0f0]">
          <li className="flex h-[51px] border-b border-[#454545] bg-[#6a6a6a]">
            <button type="button" aria-label="隐藏矩形 2" className="flex w-[37px] items-center justify-center border-r border-[#454545] bg-[#535353]"><EyeIcon /></button>
            <svg width={44} height={48} viewBox="0 0 44 48" className="ml-px" aria-hidden="true">
              <path d="M2 18V3.500h15M29 3.500h14V18M2 34v12.500h15M29 46.500h14V34" fill="none" stroke="#fff" />
              <path d="M4.500 18V5.500H17M29 5.500h10.500V18M4.500 34v10.500H22" fill="none" stroke="#333" />
              <path d="M12 14h22v23H12z" fill="#fff" />
              <path d="M12 15.500h22M15 18.500h19M12 21.500h22M15 24.500h19M12 27.500h22M15 30.500h19M12 33.500h22" stroke="#d4d4d4" strokeWidth={3} strokeDasharray="3 3" />
              <path d="M17 20h4v5h-4zM23 20h4v5h-4z" fill="#111" />
              <path d="M24 28h15v16H24z" fill="#5c5c5c" stroke="#333" />
              <path d="M28.500 32.500h9v9h-9z" fill="none" stroke="#ddd" strokeWidth={1.300} />
              <path d="M26.500 30.500h3v3h-3zM36.500 30.500h3v3h-3zM26.500 40.500h3v3h-3zM36.500 40.500h3v3h-3z" fill="#5c5c5c" stroke="#ddd" />
            </svg>
            <span className="ml-[10px] self-center">矩形 2</span>
          </li>
          <li className="flex h-[52px] border-b border-[#454545] bg-[#535353]">
            <button type="button" aria-label="隐藏背景" className="flex w-[37px] items-center justify-center border-r border-[#454545]"><EyeIcon /></button>
            <span className="mt-[6px] ml-1 flex h-10 w-[37px] items-center justify-center border border-[#333]"><span className="h-6 w-[22px] bg-white" /></span>
            <span className="ml-[13px] self-center">背景</span>
            <svg width={14} height={16} viewBox="0 0 14 16" fill="none" stroke="currentColor" strokeWidth={1.500} className="mr-[19px] ml-auto self-center" aria-label="已锁定"><path d="M3.500 6V4a3.500 3.500 0 0 1 7 0v2M1.500 6.500h11v8h-11z" /><circle cx="7" cy="10.500" r=".8" fill="currentColor" /></svg>
          </li>
        </ul>
        <div className="w-5 shrink-0 bg-[#4a4a4a]" />
      </div>
      <div className="flex h-8 shrink-0 items-center justify-end border-t border-[#383838] bg-[#535353] pr-[25px] [&>button]:relative [&>button]:flex [&>button]:w-[34px] [&>button]:items-center [&>button]:justify-center">
        <button type="button" aria-label="链接图层" className="text-[#8a8a8a]"><LinkIcon size={19} /></button>
        <button type="button" aria-label="图层样式" className="text-[17px] leading-5 italic">fx<Caret /></button>
        <button type="button" aria-label="添加图层蒙版"><svg width={17} height={13} viewBox="0 0 17 13"><path d="M0 0h17v13H0z" fill="currentColor" /><circle cx="8.500" cy="6.500" r="3.600" fill="#444" /></svg></button>
        <button type="button" aria-label="新建调整图层"><HalfCircle size={18} /><Caret /></button>
        <button type="button" aria-label="新建组"><svg width={16} height={12} viewBox="0 0 16 12" fill="currentColor"><path d="M0 0h6l1.500 2H16v10H0z" /></svg></button>
        <button type="button" aria-label="新建图层"><svg width={15} height={15} viewBox="0 0 15 15" fill="none" stroke="currentColor" strokeWidth={1.400}><path d="M1 1h13v13H1zM7.500 4v7M4 7.500h7" /></svg></button>
        <button type="button" aria-label="删除图层"><TrashIcon size={16} /></button>
      </div>
    </section>
  );
}

// ---------- taskbar ----------

const apps = [
  { name: '设置', icon: <svg width={24} height={24} viewBox="0 0 24 24" fill="none" stroke="#4a4a4a"><circle cx="12" cy="12" r="7" strokeWidth={3.400} /><path d="M12 .5v4M12 19.500v4M.5 12h4M19.500 12h4M3.900 3.900l2.800 2.800M17.300 17.300l2.800 2.800M3.900 20.100l2.800-2.800M17.300 6.700l2.800-2.800" strokeWidth={3.400} /></svg> },
  { name: '钉钉', icon: <svg width={30} height={30} viewBox="0 0 30 30"><circle cx="15" cy="15" r="15" fill="#3296fa" /><path d="M8 6c4 3 9 4 13.500 6.500 1 .6.800 2 .2 3L20 18.500h2l-5 6 .7-4h-2l.8-2.500c-3 0-5-1-6-3 1.500.6 3 .7 4.500.5-3-.7-5-2-6-4 1.500.6 3.500 1 5 1C10.500 11 8.500 9 8 6z" fill="#fff" /></svg> },
  { name: 'Photoshop', active: true, icon: <span className="mb-[3px] flex h-[27px] w-7 items-center justify-center rounded bg-[#001e36] pb-0.5 text-[15px] font-bold text-[#31a8ff]">Ps</span> },
  { name: '爱奇艺', icon: <span className="flex size-[30px] items-center justify-center rounded bg-[#00cc00]"><span className="flex h-5 w-6 items-center justify-center rounded-md border-y-2 border-white text-[11px] leading-none font-bold text-white">iQIY</span></span> },
  { name: '文件资源管理器', icon: <svg width={28} height={24} viewBox="0 0 28 24"><path d="M0 1h11l2 2v4H0z" fill="#e0a010" /><path d="M0 4.500h11l2-1.500h15v19.500H0z" fill="#ffd35c" /><path d="M5 23.500V14l2-1.500h14l2 1.500v9.500h-5V18h-8v5.500z" fill="#3a96dd" /></svg> },
  { name: '网易云音乐', icon: <svg width={30} height={30} viewBox="0 0 30 30" fill="none" stroke="#fff" strokeWidth={2.200} strokeLinecap="round"><rect width="30" height="30" rx="5" fill="#dd001b" stroke="none" /><path d="M20 5.500c-2-1.500-4.500-.5-4 2l1.500 8a2.800 2.800 0 1 1-5-1.500c1-3 6.500-3.500 9-.5 3.500 4.500 0 11.500-6.500 11.500-10 0-12-12-4-15.500" /></svg> },
  { name: '搜狗浏览器', icon: <svg width={30} height={30} viewBox="0 0 30 30"><circle cx="15" cy="15" r="14" fill="#fff" stroke="#c8c8c8" /><circle cx="15" cy="15" r="12.500" fill="#3f87ee" /><path d="M21 6.500C16.500 4 10 6 10.500 10.500c.5 4.500 8.500 4 8.500 9 0 3.500-4.500 4.500-8.500 3.500" fill="none" stroke="#fff" strokeWidth={5} /></svg> },
  { name: '画图', icon: <svg width={30} height={30} viewBox="0 0 30 30"><path d="M12 5C20 3 27 9 26 17c-1 6-4 11-8 11-3 0-2-4-5-5-4-1-8 3-11 0C-1 17 4 7 12 5z" fill="#b9d9ee" stroke="#7fa6c0" /><circle cx="5.500" cy="15.500" r="2" fill="#e0443c" /><circle cx="10.500" cy="10.500" r="2.200" fill="#52b043" /><circle cx="16.500" cy="9" r="2.200" fill="#f5b81c" /><circle cx="12" cy="17.500" r="2" fill="#fff" /><path d="M24 7 15.500 27l2 1L26 8z" fill="#e08a3c" /><path d="m24 1 5 1.500-1.500 5-4 .5z" fill="#b98a5e" /></svg> },
];

function Taskbar() {
  return (
    <footer className="relative flex h-[50px] shrink-0 bg-[#eee] text-black">
      <button type="button" aria-label="开始" className="flex w-[60px] shrink-0 items-center justify-center">
        <svg width={20} height={20} viewBox="0 0 20 20"><path d="M0 2.800 8.500 1.600v7.900H0zM9.500 1.500 20 0v9.500H9.500zM0 10.500h8.500v7.900L0 17.200zM9.500 10.500H20V20L9.500 18.500z" /></svg>
      </button>
      <label className="flex w-[430px] shrink-0 items-center border border-[#ccc] bg-white pl-[14px]">
        <svg width={21} height={21} viewBox="0 0 21 21" fill="none" stroke="#111" strokeWidth={1.500}><circle cx="13" cy="8" r="6.800" /><path d="m8 13-7.500 7" /></svg>
        <input type="search" aria-label="搜索" placeholder="在这里输入你要搜索的内容" className="ml-[14px] w-80 bg-transparent text-[19px] placeholder:text-[#222]" />
      </label>
      <button type="button" aria-label="Cortana" className="flex w-[60px] shrink-0 items-center justify-center">
        <span className="size-[19px] rounded-full border-[3px] border-black" />
      </button>
      <button type="button" aria-label="任务视图" className="flex w-[60px] shrink-0 items-center justify-center">
        <svg width={21} height={19} viewBox="0 0 21 19" fill="none" stroke="#111" strokeWidth={1.300}><path d="M1 0v3.500h12V0M1 19v-3.500h12V19M1 6h12v7H1zM18.500 0v4M18.500 11v8" /><path d="M17 6h3v3h-3z" fill="#111" stroke="none" /></svg>
      </button>
      <div className="ml-[3px] flex">
        {apps.map((app) => (
          <button key={app.name} type="button" aria-label={app.name} className={clsx('flex w-[62px] flex-col items-center', app.active && 'bg-[#f9f9f9]')}>
            <span className="flex flex-1 items-center pt-[3px]">{app.icon}</span>
            <span className={clsx('h-[3px] bg-[#2a8acf]', app.active ? 'w-full' : 'w-[51px]')} />
          </button>
        ))}
      </div>
      <div className="ml-auto flex items-center">
        <svg width={17} height={10} viewBox="0 0 17 10" fill="none" stroke="#111" strokeWidth={1.600} aria-label="显示隐藏的图标"><path d="m1 9 7.500-7.500L16 9" /></svg>
        <svg width={20} height={20} viewBox="0 0 20 20" className="ml-3" aria-label="安全卫士">
          <circle cx="10" cy="10" r="10" fill="#fddc1c" /><path d="M1 6C4-1 14-2 18 4c-6-3-11-2-17 2zM19 14c-3 7-13 8-17 2 6 3 11 2 17-2z" fill="#12a14b" /><path d="M10 6v8M6 10h8" stroke="#12a14b" strokeWidth={2} />
        </svg>
        <span className="ml-[10px] text-[18px] text-[#666]">中</span>
        <svg width={20} height={20} viewBox="0 0 20 20" className="ml-[15px]" aria-label="搜狗输入法">
          <path d="m1 3 14-3 3 1 2 15-2 2-13 2-2-1L0 5z" fill="#f1592a" /><path d="M14.500 5.500C11 3 5.500 4.500 6 7.500s8 1.500 8 4.500-5 3.500-8.500 1.500" fill="none" stroke="#fff" strokeWidth={2.600} />
        </svg>
        <time className="ml-5 w-[78px] text-center text-[16px] leading-[23px]">19:42<br />2021/10/5</time>
        <button type="button" aria-label="11 条新通知" className="relative ml-[22px] h-5 w-[45px]">
          <svg width={20} height={20} viewBox="0 0 20 20"><path d="M0 0h20v16h-4v4l-4-4H0z" /><path d="M4 5h12M4 8.500h12M4 12h7" stroke="#fff" strokeWidth={1.300} /></svg>
          <span className="absolute top-2 left-2 flex size-6 items-center justify-center rounded-full border border-[#777] bg-[#ddd] text-[14px]">11</span>
        </button>
        <span className="h-[50px] w-[7px] border-l border-[#bbb]" />
      </div>
      <span className="pointer-events-none absolute right-[15px] bottom-[5px] text-[20px] leading-8 text-white/80 [text-shadow:1px_1px_1px_#555]">CSDN @Wakesup</span>
    </footer>
  );
}

function SpeedBall() {
  return (
    <div className="absolute top-[940px] left-[1389px] z-10 size-[82px]">
      <svg width={82} height={82} viewBox="0 0 82 82" className="absolute inset-0">
        <circle cx="41" cy="41" r="40" fill="#1cbf58" />
        <circle cx="41" cy="41" r="38" fill="none" stroke="#32e16d" strokeWidth={5} />
        <path d="M3.200 37A38 38 0 0 1 41 3" fill="none" stroke="#6c6c6c" strokeWidth={5} />
        <circle cx="41" cy="41" r="34" fill="#dff3e0" />
        <circle cx="41" cy="41" r="29" fill="#ededed" />
      </svg>
      <div className="relative flex flex-col items-center pt-[14px] text-[#444]">
        <span className="text-[28px] leading-8 font-light">77<small className="text-[15px]">%</small></span>
        <span className="flex items-center gap-1.5 text-[12px] leading-4 text-[#222]">
          <svg width={6} height={9} viewBox="0 0 6 9" fill="#3296fa"><path d="M3 0 0 4h2v5h2V4h2z" /></svg>
          1.5K/s
        </span>
      </div>
    </div>
  );
}

export default function App() {
  return (
    <div className="relative flex h-screen flex-col overflow-hidden font-['Noto_Sans','Noto_Sans_CJK_SC',sans-serif]">
      <div className="flex min-h-0 flex-1 bg-[linear-gradient(#9fb0cc,#8fa3be_33%,#1c1a1c_36%,#0c0c10_70%,#2e2824_82%,#141414_90%,#555_97%,#222)]">
        <div className="flex min-w-0 flex-1 flex-col rounded-t-md border-r-2 border-b-2 border-l border-[#383838] bg-[#535353]">
          <MenuBar />
          <OptionsBar />
          <div className="mr-[3px] mb-[3px] ml-[5px] flex min-h-0 flex-1 border-b border-[#383838]">
            <Toolbox />
            <DocumentArea />
            <Dock />
            <aside className="ml-0.5 flex w-[315px] shrink-0 flex-col border-x border-[#383838] bg-[#535353]">
              <div className="flex h-4 shrink-0 items-center justify-end border-b border-[#383838] bg-[#434343] pr-[7px]"><DoubleArrow right /></div>
              <HistoryPanel />
              <LayersPanel />
            </aside>
          </div>
        </div>
        <div className="w-[11px] shrink-0" />
      </div>
      <Taskbar />
      <SpeedBall />
    </div>
  );
}
